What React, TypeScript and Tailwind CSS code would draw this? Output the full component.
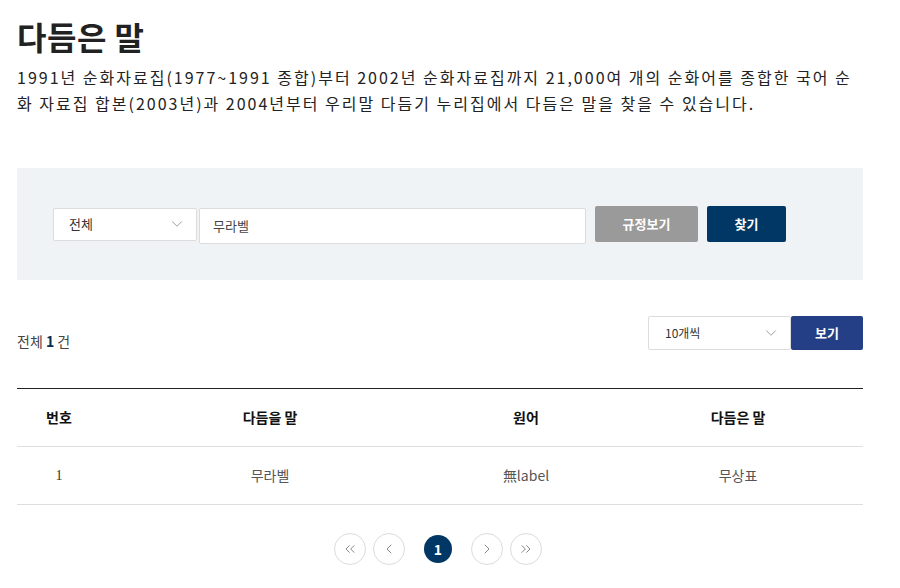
import { ChevronDown, ChevronLeft, ChevronRight, ChevronsLeft, ChevronsRight } from "lucide-react";

const font = { fontFamily: '"Noto Sans CJK KR", "Noto Sans", sans-serif' };

const rows = [{ no: "1", from: "무라벨", origin: "無label", to: "무상표" }];

const App = () => {
  return (
    <div className="w-[900px] h-[588px] bg-white px-[17px] pt-[14px] text-[#222] overflow-hidden" style={font}>
      <div className="w-[846px]">
        <h1 className="text-[32px] font-bold leading-[44px] tracking-[0.5px]">다듬은 말</h1>
        <p className="mt-[6px] text-[16px] leading-[26px] tracking-[2px] text-[#222]">
          1991년 순화자료집(1977~1991 종합)부터 2002년 순화자료집까지 21,000여 개의 순화어를 종합한 국어 순화 자료집 합본(2003년)과 2004년부터 우리말 다듬기 누리집에서 다듬은 말을 찾을 수 있습니다.
        </p>

        <div className="mt-[52px] h-[112px] bg-[#eff3f6] flex items-center pl-[36px] gap-[2px]">
          <div className="w-[144px] h-[33px] bg-white border border-[#dcdcdc] rounded-[2px] flex items-center justify-between pl-[15px] pr-[10px] text-[13px] text-[#333]">
            <span>전체</span>
            <ChevronDown size={18} strokeWidth={1.1} className="text-[#888]" />
          </div>
          <div className="w-[387px] h-[36px] bg-white border border-[#dcdcdc] rounded-[2px] flex items-center px-[13px] text-[13px] text-[#444] mt-[3px]">
            무라벨
          </div>
          <button className="ml-[7px] w-[103px] h-[36px] bg-[#9a9a9a] rounded-[2px] text-white text-[13px] font-bold">규정보기</button>
          <button className="ml-[7px] w-[79px] h-[36px] bg-[#003764] rounded-[2px] text-white text-[13px] font-bold">찾기</button>
        </div>

        <div className="mt-[36px] flex items-end justify-between">
          <div className="text-[14px] text-[#444] mb-[-2px]">
            전체 <b className="text-[#0b2b4f] font-bold">1</b> 건
          </div>
          <div className="flex">
            <div className="w-[143px] h-[34px] bg-white border border-[#dcdcdc] rounded-[2px] flex items-center justify-between pl-[16px] pr-[10px] text-[12px] text-[#333]">
              <span>10개씩</span>
              <ChevronDown size={18} strokeWidth={1.1} className="text-[#888]" />
            </div>
            <button className="w-[72px] h-[34px] bg-[#243f85] rounded-[2px] text-white text-[13px] font-bold">보기</button>
          </div>
        </div>

        <table className="mt-[38px] w-full border-t border-[#222] table-fixed text-[14px]">
          <colgroup>
            <col className="w-[84px]" />
            <col className="w-[338px]" />
            <col className="w-[174px]" />
            <col />
          </colgroup>
          <thead>
            <tr className="h-[58px] border-b border-[#dedede]">
              <th className="font-bold text-[#111]">번호</th>
              <th className="font-bold text-[#111]">다듬을 말</th>
              <th className="font-bold text-[#111]">원어</th>
              <th className="font-bold text-[#111]">다듬은 말</th>
            </tr>
          </thead>
          <tbody>
            {rows.map((r) => (
              <tr key={r.no} className="h-[58px] border-b border-[#dedede] text-[#555]">
                <td className="text-center text-[#333]" style={{ fontFamily: '"Liberation Serif", serif' }}>{r.no}</td>
                <td className="text-center">{r.from}</td>
                <td className="text-center">{r.origin}</td>
                <td className="text-center">{r.to}</td>
              </tr>
            ))}
          </tbody>
        </table>

        <div className="mt-[28px] ml-[-4px] flex justify-center items-center gap-[7px]">
          <span className="w-[32px] h-[32px] rounded-full border border-[#dcdcdc] flex items-center justify-center text-[#888]">
            <ChevronsLeft size={16} strokeWidth={1.5} />
          </span>
          <span className="w-[32px] h-[32px] rounded-full border border-[#dcdcdc] flex items-center justify-center text-[#888]">
            <ChevronLeft size={16} strokeWidth={1.5} />
          </span>
          <span className="mx-[12px] w-[28px] h-[28px] rounded-full bg-[#003764] flex items-center justify-center text-white text-[14px] font-bold">
            1
          </span>
          <span className="w-[32px] h-[32px] rounded-full border border-[#dcdcdc] flex items-center justify-center text-[#888]">
            <ChevronRight size={16} strokeWidth={1.5} />
          </span>
          <span className="w-[32px] h-[32px] rounded-full border border-[#dcdcdc] flex items-center justify-center text-[#888]">
            <ChevronsRight size={16} strokeWidth={1.5} />
          </span>
        </div>
      </div>
    </div>
  );
};

export default App;
